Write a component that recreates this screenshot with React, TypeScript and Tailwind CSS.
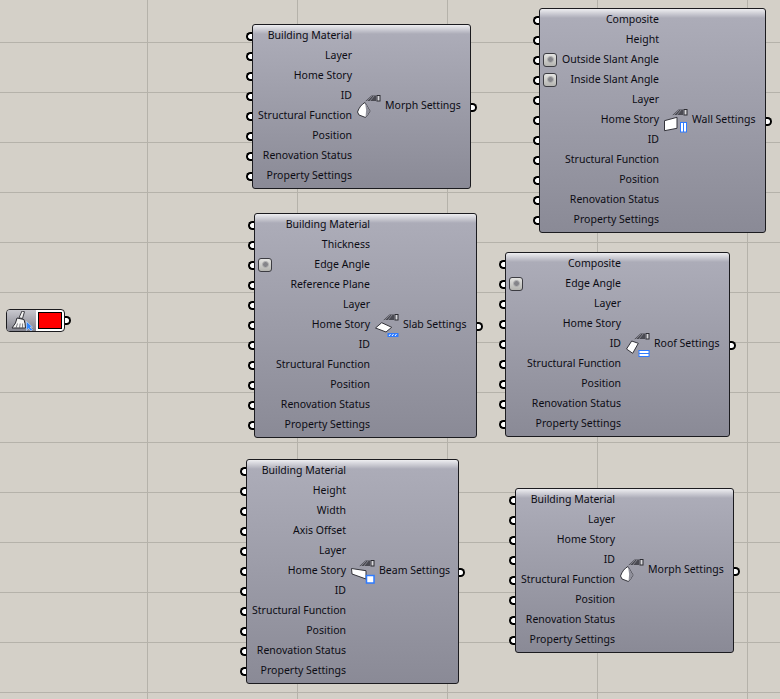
type Kind = "morph" | "wall" | "slab" | "roof" | "beam";

type Input = { name: string; chip?: boolean };

type NodeData = {
  title: string;
  kind: Kind;
  box: string;
  col: string;
  inputs: Input[];
};

const names = (...list: string[]): Input[] => list.map((name) => ({ name }));

const morphInputs = names(
  "Building Material",
  "Layer",
  "Home Story",
  "ID",
  "Structural Function",
  "Position",
  "Renovation Status",
  "Property Settings"
);

const nodes: NodeData[] = [
  {
    title: "Morph Settings",
    kind: "morph",
    box: "left-[252px] top-[24px] w-[219px]",
    col: "w-[99px]",
    inputs: morphInputs,
  },
  {
    title: "Wall Settings",
    kind: "wall",
    box: "left-[539px] top-[8px] w-[227px]",
    col: "w-[119px]",
    inputs: [
      { name: "Composite" },
      { name: "Height" },
      { name: "Outside Slant Angle", chip: true },
      { name: "Inside Slant Angle", chip: true },
      ...names("Layer", "Home Story", "ID", "Structural Function", "Position", "Renovation Status", "Property Settings"),
    ],
  },
  {
    title: "Slab Settings",
    kind: "slab",
    box: "left-[254px] top-[213px] w-[223px]",
    col: "w-[115px]",
    inputs: [
      { name: "Building Material" },
      { name: "Thickness" },
      { name: "Edge Angle", chip: true },
      ...names("Reference Plane", "Layer", "Home Story", "ID", "Structural Function", "Position", "Renovation Status", "Property Settings"),
    ],
  },
  {
    title: "Roof Settings",
    kind: "roof",
    box: "left-[505px] top-[252px] w-[225px]",
    col: "w-[115px]",
    inputs: [
      { name: "Composite" },
      { name: "Edge Angle", chip: true },
      ...names("Layer", "Home Story", "ID", "Structural Function", "Position", "Renovation Status", "Property Settings"),
    ],
  },
  {
    title: "Beam Settings",
    kind: "beam",
    box: "left-[246px] top-[459px] w-[213px]",
    col: "w-[99px]",
    inputs: names(
      "Building Material",
      "Height",
      "Width",
      "Axis Offset",
      "Layer",
      "Home Story",
      "ID",
      "Structural Function",
      "Position",
      "Renovation Status",
      "Property Settings"
    ),
  },
  {
    title: "Morph Settings",
    kind: "morph",
    box: "left-[515px] top-[488px] w-[219px]",
    col: "w-[99px]",
    inputs: morphInputs,
  },
];

function NodeIcon({ kind }: { kind: Kind }) {
  return (
    <svg width="24" height="26" viewBox="0 0 24 26" className="mt-[4px] shrink-0">
      <path d="M8 7.5 14.5 1.5H19V7H8Z" fill="#4a4a52" />
      <path d="M10 7 15 2M13 7l4-5" stroke="#9a9aa4" strokeWidth="0.7" />
      <rect x="20" y="1.5" width="3" height="5.5" fill="#d8d8dc" stroke="#2c2c32" />

      {kind === "morph" && (
        <>
          <path d="M0.5 18Q3 11 8 8.5L13 17Q11 21 8.5 23.5L2 21Z" fill="#fff" stroke="#33333a" />
          <path d="M8 8.5 13 17Q11 21 8.5 23.5 10 16 8 8.5Z" fill="#8f8f9a" />
        </>
      )}

      {kind === "wall" && (
        <>
          <path d="M0.5 12.7 13 9.3V20.3L0.5 22.7Z" fill="#fff" stroke="#33333a" />
          <rect x="16" y="14" width="7" height="10.5" fill="#2e7bff" />
          <rect x="17" y="15" width="2" height="8.5" fill="#fff" />
          <rect x="20" y="15" width="2" height="8.5" fill="#fff" />
        </>
      )}

      {kind === "slab" && (
        <>
          <path d="M0.5 15 6.7 9.7 16.7 14.3 11 19Z" fill="#fff" stroke="#33333a" />
          <rect x="12.5" y="20" width="11" height="4" fill="#2e7bff" />
          <path d="M14 23 15.5 21M17 23 18.5 21M20 23 21.5 21" stroke="#fff" />
        </>
      )}

      {kind === "roof" && (
        <>
          <path d="M0.5 17 5.7 9 12.3 11.3 6.7 21.3Z" fill="#fff" stroke="#33333a" />
          <rect x="12.5" y="18" width="11" height="7" fill="#2e7bff" />
          <rect x="13.5" y="19" width="9" height="2" fill="#fff" />
          <rect x="13.5" y="22" width="9" height="2" fill="#fff" />
        </>
      )}

      {kind === "beam" && (
        <>
          <path d="M0.5 9.5 15 11.7V20L1 15Z" fill="#fff" stroke="#33333a" />
          <rect x="15.5" y="16.5" width="7.5" height="7.5" fill="#fff" stroke="#2e7bff" strokeWidth="1.5" />
        </>
      )}
    </svg>
  );
}

function AngleChip() {
  return (
    <div className="ml-[3px] mt-[1px] flex h-[14px] w-[14px] shrink-0 items-center justify-center rounded-[3px] border border-[#3c3c42] bg-[linear-gradient(to_bottom,#e4e4e2,#b4b4b0)]">
      <div className="h-[7px] w-[7px] rounded-full border border-[#b4b4b4] bg-[#85858a]" />
    </div>
  );
}

function Component({ data }: { data: NodeData }) {
  return (
    <div
      className={`absolute ${data.box} flex items-center rounded-[3px] border border-[#1b1b1f] pb-[3px] bg-[linear-gradient(to_bottom,#eeeef1_0px,#acacb8_9px,#8a8a96_100%)]`}
    >
      <div className={`${data.col} shrink-0`}>
        {data.inputs.map((input) => (
          <div key={input.name} className="relative flex h-5 items-center justify-between">
            <div className="absolute left-[-7px] top-[7px] h-[9px] w-[6px] rounded-l-full border-2 border-r-0 border-black bg-white" />
            {input.chip ? <AngleChip /> : <span />}
            <span className="whitespace-nowrap">{input.name}</span>
          </div>
        ))}
      </div>
      <div className="ml-[5px]">
        <NodeIcon kind={data.kind} />
      </div>
      <span className="ml-[4px] whitespace-nowrap">{data.title}</span>
      <div className="absolute right-[-7px] top-1/2 mt-[-4px] h-[9px] w-[6px] rounded-r-full border-2 border-l-0 border-black bg-white" />
    </div>
  );
}

function ColourSwatch() {
  return (
    <div className="absolute left-[6px] top-[309px] flex h-[23px] w-[59px] rounded-[4px] border border-[#1b1b1f] bg-white">
      <div className="flex w-[29px] items-center justify-center rounded-l-[3px] bg-[linear-gradient(to_bottom,#c8c8ce,#83838d)]">
        <svg width="24" height="20" viewBox="0 0 24 20">
          <path d="M12 0 14.5 0.7 12.5 7.5 9 6.8Z" fill="#f2f2f2" stroke="#2c2c32" strokeWidth="0.9" />
          <path d="M7 7 14 8.5 15 12.5 15.5 17H2L5.5 12Z" fill="#f4f4f4" stroke="#2c2c32" />
          <path d="M6 17 7.5 12.5M9.5 17 10.2 12.5M12.5 17 12.6 12.5" stroke="#5e5e66" strokeWidth="0.8" />
          <path d="M16.5 10.5v9l2-2.2 2.4 2.7 1.6-1.2-2.4-2.7H22.500Z" fill="#2e86ff" stroke="#e8f0ff" strokeWidth="0.5" />
        </svg>
      </div>
      <div className="flex flex-1 items-center justify-center">
        <div className="h-[17px] w-[24px] border border-black bg-[#ff0000]" />
      </div>
      <div className="absolute right-[-7px] top-[6px] h-[9px] w-[6px] rounded-r-full border-2 border-l-0 border-black bg-white" />
    </div>
  );
}

export default function App() {
  return (
    <div className="relative h-[699px] w-full overflow-hidden bg-[#d4d0c8] bg-[linear-gradient(to_right,#b5b2aa_1px,transparent_1px),linear-gradient(to_bottom,#b5b2aa_1px,transparent_1px)] bg-[size:150px_50px] bg-[position:147px_42px] font-['Noto_Sans',sans-serif] text-[10.5px] leading-none text-[#0c0c14]">
      <ColourSwatch />
      {nodes.map((node) => (
        <Component key={node.box} data={node} />
      ))}
    </div>
  );
}
